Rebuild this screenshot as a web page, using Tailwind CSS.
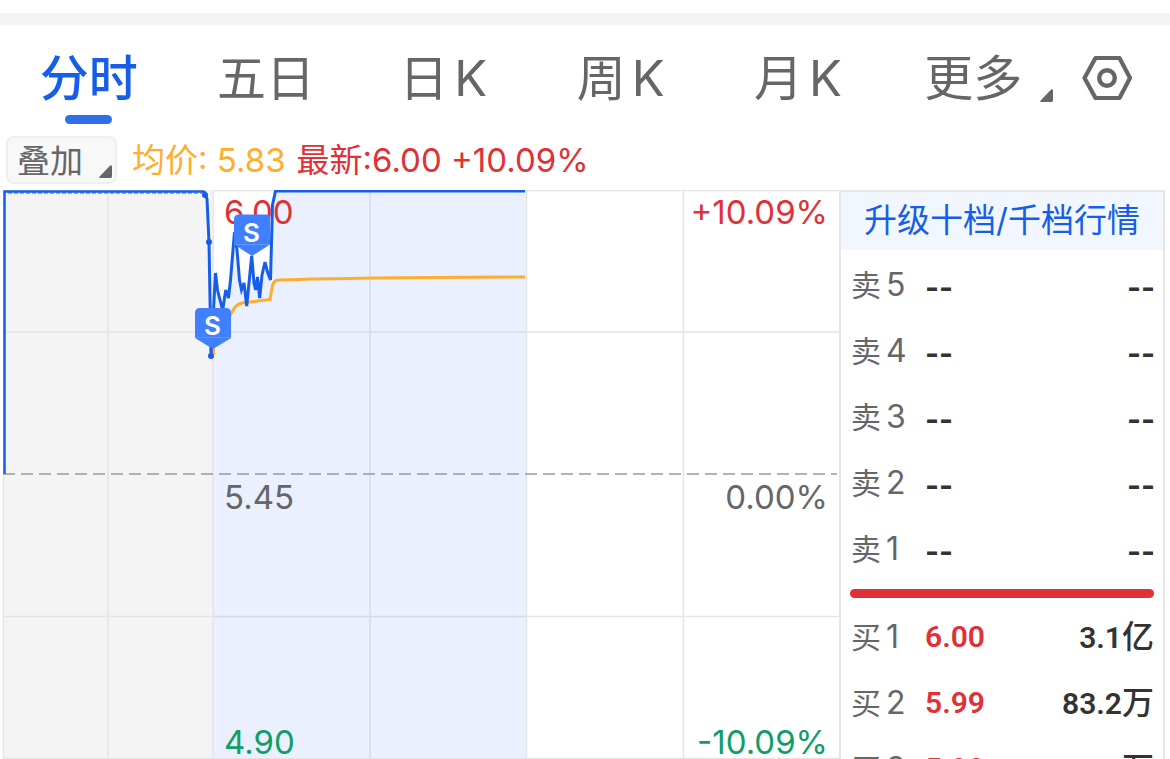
<!DOCTYPE html>
<html lang="zh-CN">
<head>
<meta charset="utf-8">
<meta name="viewport" content="width=device-width, initial-scale=1">
<title>分时行情</title>
<script src="https://cdn.jsdelivr.net/npm/@tailwindcss/browser@4"></script>
</head>
<body class="flex h-screen flex-col overflow-hidden bg-white font-['Inter','Noto_Sans_CJK_SC',sans-serif] text-[#666666]">
  <div class="mt-[13px] h-3 shrink-0 bg-[#f4f4f4]"></div>

  <nav class="flex h-[110px] shrink-0 items-stretch text-[49px]">
    <div class="grid flex-1 grid-cols-6">
      <button class="flex flex-col items-center pt-5 font-medium text-[#165ee9]">
        <span class="leading-[68px]">分时</span>
        <span class="mt-[2px] h-[9px] w-[47px] rounded-full bg-[#316fea]"></span>
      </button>
      <button class="flex flex-col items-center pt-5"><span class="leading-[68px]">五日</span></button>
      <button class="flex justify-center gap-[6px] pt-5 leading-[68px]"><span>日</span><span>K</span></button>
      <button class="flex justify-center gap-[6px] pt-5 leading-[68px]"><span>周</span><span>K</span></button>
      <button class="flex justify-center gap-[6px] pt-5 leading-[68px]"><span>月</span><span>K</span></button>
      <button class="relative flex flex-col items-center pt-5">
        <span class="pr-1 leading-[68px]">更多</span>
        <svg class="absolute right-[11px] top-16 size-[13px]" viewBox="0 0 14 14" fill="#666666" aria-hidden="true"><path d="M12 0.500q2-.5 2 1.500V12q0 2-2 2H1.500q-2 0-.8-1.500z"/></svg>
      </button>
    </div>
    <button class="flex w-[106px] items-start pl-[17px] pt-7" aria-label="设置">
      <svg class="h-[50px] w-[52px]" viewBox="0 0 52 50" fill="none" stroke="#666666" aria-hidden="true">
        <path d="M14.500 5H38.500L49 25L38.500 45H14.500L3.500 25Z" stroke-width="4.200" stroke-linejoin="round"/>
        <circle cx="26" cy="25" r="7.800" stroke-width="4.400"/>
      </svg>
    </button>
  </nav>

  <div class="flex h-[55px] shrink-0 items-start pl-[6px] pt-px text-[33px] leading-[48px]">
    <button class="relative h-12 w-[111px] rounded-lg border-2 border-[#efefef] bg-[#f8f8f8] pl-[9px] text-left leading-[46px]">叠加
      <svg class="absolute bottom-[4px] right-[3px] size-[13px]" viewBox="0 0 14 14" fill="#666666" aria-hidden="true"><path d="M12 0.500q2-.5 2 1.500V12q0 2-2 2H1.500q-2 0-.8-1.500z"/></svg>
    </button>
    <span class="ml-[15px] text-[#ffad2d]">均价: 5.83</span>
    <span class="ml-[11px] text-[#e03136]">最新:6.00 +10.09%</span>
  </div>

  <main class="flex min-h-0 flex-1 items-start pr-[5px]">
    <svg class="min-w-0 flex-1" viewBox="0 190 839 569" role="img" aria-label="分时走势图">
      <rect x="3" y="190" width="210" height="569" fill="#f4f4f4"/>
      <g font-size="33" font-family="Inter, sans-serif">
        <path d="M213 759V330L215.500 273L217.500 290L220 300L222.700 310L225.700 290L228.500 298L230.500 280L234.500 232L237 250L239.500 280L241.500 290L244 283L246.700 306L251.700 256L254 283L255.700 290L257.500 277L259.700 298L262 275L265 262L267.500 272L270.500 280L272.500 205L275.500 191H526V759Z" fill="#eaf0fe"/>
        <g fill="none" stroke-width="1.500">
          <path d="M3 332H213M3 616.500H213M108 190V759" stroke="#e4e4e5"/>
          <path d="M213 332H526M213 616.500H526M370 191V759" stroke="#d3dae9"/>
          <path d="M526 332H839M526 616.500H839M526.500 191V759M683.500 191V759M213 190V759M3.500 474V759" stroke="#e5e5e6"/>
          <path d="M213 190.500H839M3 758.500H839" stroke="#e5e5e6"/>
          <path d="M3 474H837" stroke="#999999" stroke-dasharray="12 6"/>
        </g>
        <text x="224" y="224" fill="#e03136">6.00</text>
        <text x="224" y="509" fill="#666666">5.45</text>
        <text x="224" y="754" fill="#119d67">4.90</text>
        <g text-anchor="end">
          <text x="828" y="224" fill="#e03136">+10.09%</text>
          <text x="828" y="509" fill="#666666">0.00%</text>
          <text x="828" y="754" fill="#119d67">-10.09%</text>
        </g>
        <path d="M4.500 474V191.500H204" fill="none" stroke="#165ee9" stroke-width="2.500"/>
        <path d="M8 193H204" fill="none" stroke="#165ee9" stroke-width="1" stroke-dasharray="4 2"/>
        <path d="M213.500 355V345L232 312Q236 304 242 303L270 299.500L272 288Q273 280 279 280Q360 277.500 525 277" fill="none" stroke="#ffad2d" stroke-width="3"/>
        <path d="M204 191L207 199L209 242L211 356L215.500 273L217.500 290L220 300L222.700 310L225.700 290L228.500 298L230.500 280L234.500 232L237 250L239.500 280L241.500 290L244 283L246.700 306L251.700 256L254 283L255.700 290L257.500 277L259.700 298L262 275L265 262L267.500 272L270.500 280L272.500 205L275.500 191H525" fill="none" stroke="#165ee9" stroke-width="3"/>
        <g fill="#165ee9"><circle cx="205" cy="195" r="3"/><circle cx="209" cy="242" r="3"/><circle cx="211" cy="356" r="3"/></g>
        <g fill="#4080ff">
          <path d="M239 214.500H266Q270 214.500 270 219V244.500L252 256L234 244.500V219Q234 214.500 239 214.500Z"/>
          <path d="M200 308H226Q231 308 231 313V338L213 349L195 338V313Q195 308 200 308Z"/>
          <path d="M234 244.500H270M195 337.500H231" stroke="#6097ff"/>
        </g>
        <g fill="#ffffff" font-size="26" font-weight="600" text-anchor="middle">
          <text x="251.500" y="242">S</text>
          <text x="212.500" y="335">S</text>
        </g>
      </g>
    </svg>

    <section class="h-full w-[326px] shrink-0 overflow-hidden border-x-2 border-t-2 border-[#e6e6e8] text-[#333333]" aria-label="五档行情">
      <a href="#" class="flex h-[58px] items-center justify-center pb-[2px] bg-[#f2f6ff] text-[33px] leading-none text-[#165ee9]">升级十档/千档行情</a>
      <table class="mt-[2px] w-full text-[32px] leading-[62px]">
        <tbody class="text-[30px] font-bold">
          <tr class="h-[66px]"><th class="w-[84px] whitespace-nowrap p-0 pl-[10px] text-left text-[32px] font-normal text-[#666666]"><span class="mr-[5px] text-[30px]">卖</span>5</th><td class="p-0 pt-1">--</td><td class="p-0 pr-2 pt-1 text-right">--</td></tr>
          <tr class="h-[66px]"><th class="p-0 pl-[10px] text-left text-[32px] font-normal text-[#666666]"><span class="mr-[5px] text-[30px]">卖</span>4</th><td class="p-0 pt-1">--</td><td class="p-0 pr-2 pt-1 text-right">--</td></tr>
          <tr class="h-[66px]"><th class="p-0 pl-[10px] text-left text-[32px] font-normal text-[#666666]"><span class="mr-[5px] text-[30px]">卖</span>3</th><td class="p-0 pt-1">--</td><td class="p-0 pr-2 pt-1 text-right">--</td></tr>
          <tr class="h-[66px]"><th class="p-0 pl-[10px] text-left text-[32px] font-normal text-[#666666]"><span class="mr-[5px] text-[30px]">卖</span>2</th><td class="p-0 pt-1">--</td><td class="p-0 pr-2 pt-1 text-right">--</td></tr>
          <tr class="h-[66px]"><th class="p-0 pl-[10px] text-left text-[32px] font-normal text-[#666666]"><span class="mr-[5px] text-[30px]">卖</span>1</th><td class="p-0 pt-1">--</td><td class="p-0 pr-2 pt-1 text-right">--</td></tr>
        </tbody>
      </table>
      <div class="mx-[9px] mt-[7px] h-[9px] rounded-full bg-[#e03136]"></div>
      <table class="mt-[6px] w-full text-[32px] leading-[62px]">
        <tbody class="font-['Roboto','Noto_Sans_CJK_SC',sans-serif] text-[30px] font-semibold">
          <tr class="h-[66px]"><th class="w-[84px] whitespace-nowrap p-0 pl-[10px] text-left font-['Inter','Noto_Sans_CJK_SC',sans-serif] text-[32px] font-normal text-[#666666]"><span class="mr-[5px] text-[30px]">买</span>1</th><td class="p-0 text-[#e03136]">6.00</td><td class="p-0 pr-[9px] text-right">3.1<span class="text-[32px] font-medium">亿</span></td></tr>
          <tr class="h-[66px]"><th class="p-0 pl-[10px] text-left font-['Inter','Noto_Sans_CJK_SC',sans-serif] text-[32px] font-normal text-[#666666]"><span class="mr-[5px] text-[30px]">买</span>2</th><td class="p-0 text-[#e03136]">5.99</td><td class="p-0 pr-[9px] text-right">83.2<span class="text-[32px] font-medium">万</span></td></tr>
          <tr class="h-[66px]"><th class="p-0 pl-[10px] text-left font-['Inter','Noto_Sans_CJK_SC',sans-serif] text-[32px] font-normal text-[#666666]"><span class="mr-[5px] text-[30px]">买</span>3</th><td class="p-0 text-[#e03136]">5.98</td><td class="p-0 pr-[9px] text-right">117<span class="text-[32px] font-medium">万</span></td></tr>
        </tbody>
      </table>
    </section>
  </main>
</body>
</html>
